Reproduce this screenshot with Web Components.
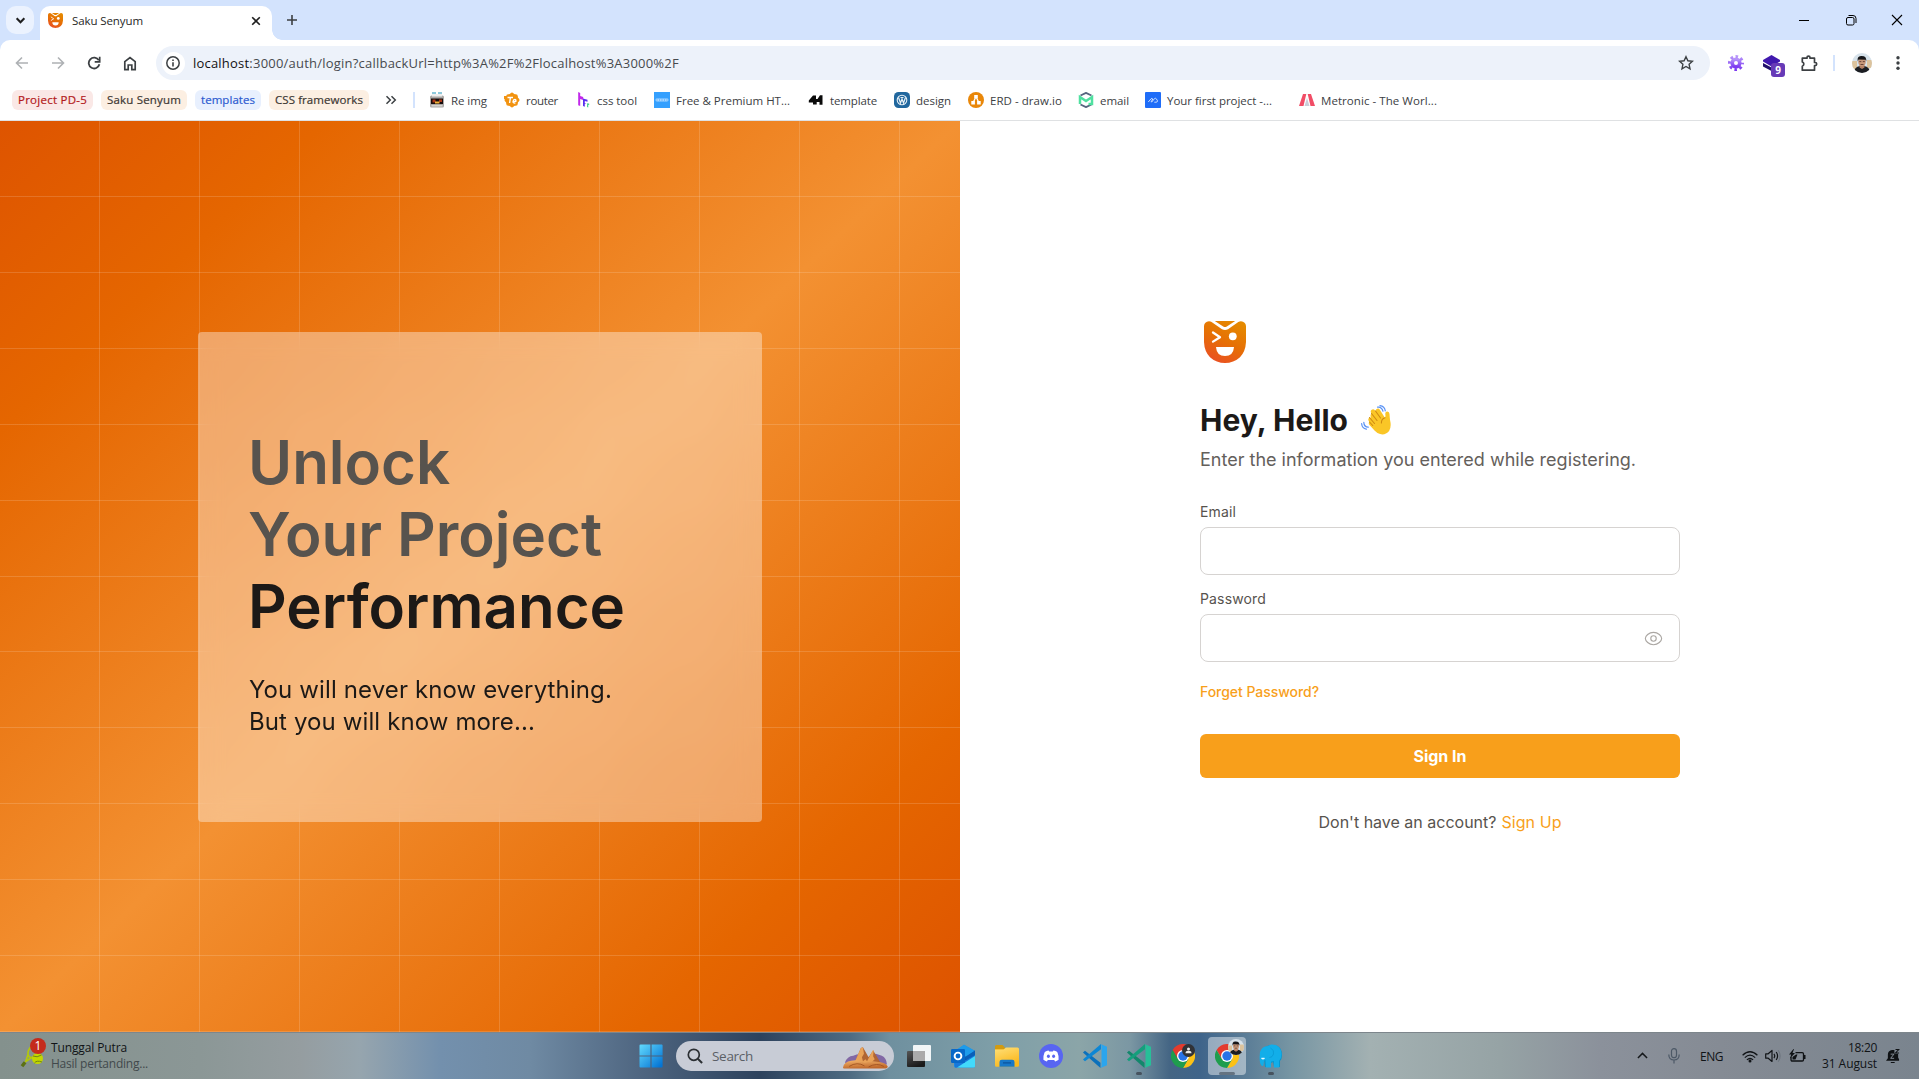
<!DOCTYPE html>
<html lang="en">
<head>
<meta charset="utf-8">
<title>Saku Senyum</title>
<style>
  html, body { margin: 0; height: 100%; overflow: hidden; background: #fff; }
  body { font-family: "Open Sans", "Noto Sans", sans-serif; }
</style>
</head>
<body>
<desktop-screen></desktop-screen>
<script>
const ICONS = {
  logo: ['0 0 42 42', `<defs><linearGradient id="g" x1=".75" y1="0" x2=".25" y2="1"><stop offset="0" stop-color="#e58a00"/><stop offset=".5" stop-color="#e66f05"/><stop offset="1" stop-color="#ea4f24"/></linearGradient></defs>
    <path fill="url(#g)" d="M10.8 0h20.4l-8.4 5.4q-1.8 1-3.6 0zM0 5Q.4.6 5 0.2q1.600 0 2.600.8L18 8.300q3 1.400 6 0L34.300 1q1.200-.8 2.700-.8Q41.500.6 42 5v16Q41.500 30.500 36 36.200 29.600 42 21 42T6 36.200Q.4 30.500 0 21z"/>
    <path d="M9 11.500l7 4.700-7 4.400" fill="none" stroke="#fff" stroke-width="2.300" stroke-linecap="round" stroke-linejoin="round"/>
    <circle cx="28.800" cy="15.300" r="3.900" fill="#fff"/><path fill="#fff" d="M12 26h18q-.6 9-9 9t-9-9z"/>`],
  down: ['0 0 10 10', `<path d="M1.500 3L5 6.500 8.500 3" fill="none" stroke="#1f1f1f" stroke-width="1.900"/>`],
  close: ['0 0 10 10', `<path d="M1.200 1.200l7.600 7.600M8.800 1.200L1.200 8.800" stroke="#1f1f1f" stroke-width="1.600"/>`],
  plus: ['0 0 12 12', `<path d="M6 1v10M1 6h10" stroke="#3c3f42" stroke-width="1.600"/>`],
  min: ['0 0 12 12', `<path d="M1 6.500h10" stroke="#000"/>`],
  restore: ['0 0 12 12', `<rect x="1.500" y="3.500" width="7.500" height="7.500" rx="1.500" fill="none" stroke="#000"/><path d="M3.500 1.500h4.500a3 3 0 0 1 3 3V9" fill="none" stroke="#000"/>`],
  winclose: ['0 0 12 12', `<path d="M1 1l10 10M11 1L1 11" stroke="#000" stroke-width="1.100"/>`],
  back: ['0 0 14 14', `<path d="M13 7H2M7 1.500L1.500 7 7 12.500" fill="none" stroke="#aeb1b4" stroke-width="1.600"/>`],
  fwd: ['0 0 14 14', `<path d="M1 7h11M7 1.500L12.500 7 7 12.500" fill="none" stroke="#aeb1b4" stroke-width="1.600"/>`],
  reload: ['0 0 14 14', `<path d="M11.800 4.300A5.400 5.400 0 1 0 12.400 8.300" fill="none" stroke="#3c4043" stroke-width="1.800"/><path d="M12.700.8v5H7.700" fill="none" stroke="#3c4043" stroke-width="1.700"/>`],
  home: ['0 0 14 15', `<path d="M1.800 13.700V5.700L7 1.500l5.200 4.200v8H8.800V9H5.200v4.700z" fill="none" stroke="#3c4043" stroke-width="1.700"/>`],
  info: ['0 0 16 16', `<circle cx="8" cy="8" r="6.200" fill="none" stroke="#3c4043" stroke-width="1.500"/><path d="M8 7.200v4.200M8 4.400v1.600" stroke="#3c4043" stroke-width="1.600"/>`],
  star: ['0 0 16 16', `<path d="M8 1.700l1.900 4.100 4.500.5-3.300 3 .9 4.500L8 11.500l-4 2.300.9-4.500-3.300-3 4.500-.5z" fill="none" stroke="#3c4043" stroke-width="1.400"/>`],
  gear: ['0 0 16 16', `<defs><linearGradient id="g" x2="0" y2="1"><stop stop-color="#b794fa"/><stop offset="1" stop-color="#7c3af0"/></linearGradient></defs><g stroke="url(#g)" fill="none"><circle cx="8" cy="8" r="3.800" stroke-width="3.600"/><circle cx="8" cy="8" r="6.500" stroke-width="3" stroke-dasharray="2.550 2.550" stroke-dashoffset="1.200"/></g>`],
  stack: ['0 0 17 17', `<path fill="#21106b" d="M0 8l8.500 4.500L17 8v3.500L8.500 16 0 11.500z"/><path fill="#4119ae" d="M8.500 0L17 5v1.500l-8.500 5-8.500-5V5z"/>`],
  puzzle: ['0 0 18 18', `<path d="M2.300 4.200H7V3.600a1.500 1.500 0 0 1 3 0v.6h4.500v4.300h.6a1.600 1.600 0 0 1 0 3.200h-.6v4.500H2.300v-4a2.200 2.200 0 0 0 0-4.200z" fill="none" stroke="#3c4043" stroke-width="1.700" stroke-linejoin="round"/>`],
  avatar: ['0 0 20 20', `<defs><clipPath id="c"><circle cx="10" cy="10" r="10"/></clipPath></defs><g clip-path="url(#c)"><path fill="#d7e2ea" d="M0 0h20v20H0z"/><path fill="#dcc39d" d="M0 8h5v8H0zM15 7h5v8h-5z"/><path d="M2 20q0-6 6-7h4q6 1 6 7z" fill="#1b1d22"/><path d="M7.500 11h5v3.500L10 16l-2.500-1.500z" fill="#b37f63"/><ellipse cx="10" cy="8.800" rx="3.800" ry="4.600" fill="#c8987a"/><path d="M5.800 8.500Q4.700 3.300 9 3.100q5.800-.4 5.300 5.400l-.8-1.700Q10 6.600 6.600 6.600z" fill="#17171a"/><path d="M7.300 8.600h2M10.800 8.600h2M8.500 11.500h3" stroke="#5c3a30" stroke-width=".9"/></g>`],
  dots: ['0 0 4 16', `<g fill="#3c4043"><circle cx="2" cy="2.700" r="1.700"/><circle cx="2" cy="8" r="1.700"/><circle cx="2" cy="13.300" r="1.700"/></g>`],
  more: ['0 0 12 10', `<path d="M1.500 1.200L5.300 5 1.500 8.800M6.500 1.200L10.300 5 6.500 8.800" fill="none" stroke="#3c4043" stroke-width="1.500"/>`],
  reimg: ['0 0 16 16', `<path fill="#8ec9dc" d="M3 0h4v2H3zM9 0h4v2H9z"/><rect y="3.500" x="1" width="14" height="12" rx="1.500" fill="#aaa7a5"/><path fill="#eee" d="M3 2h10v2.500H3z"/><path fill="#170d0d" d="M2 6.500h12v5.500H2z"/><path fill="#ac3717" d="M3.500 7.500h3v3h-3zM10 7.500h3v2.500h-3z"/><path fill="#f5b43b" d="M6 9.500h4.500v2H6z"/><path fill="#d7d4d0" d="M2.500 13h11v1.500h-11z"/>`],
  router: ['0 0 16 16', `<g fill="#f29310"><rect x="2.200" y="2.200" width="11.600" height="11.600" rx="2"/><rect x="2.200" y="2.200" width="11.600" height="11.600" rx="2" transform="rotate(45 8 8)"/><path d="M0 4h8v3H0z"/></g><path d="M3.500 5.500H9M6.400 5.500L5.600 11M9.300 9.400h2.500q.3-2-1-2-1.500 0-1.700 2-.2 2 2.300 1.500" stroke="#fff" stroke-width="1.400" fill="none"/>`],
  csstool: ['0 0 16 16', `<path d="M3.200 0l2 1v3l3 1v3L5.200 7v7l-2-.7z" fill="#c128ea"/><path d="M8 6.500l4.500 1.200v2L9.800 9v2l1.700.6-1.700.2v3L8 14z" fill="#5a2ff0"/><path d="M12.200 11.200l2 .6v1l-1 0v2.700l-1-.4z" fill="#21c87a"/>`],
  free: ['0 0 16 16', `<path fill="#35a0fe" d="M0 0h16v16H0z"/><rect x="1.500" y="6.600" width="13" height="2.800" rx="1.400" fill="#a9d6ff"/><path d="M2.500 8h11" stroke="#35a0fe" stroke-dasharray="1 1.500"/>`],
  template: ['0 0 16 16', `<path d="M.8 8.500L5 3.500h3V7h1.500l2.500-3.800h2.500v9.500h-3V10H8.700v2.500H5V10.500H.8z" fill="#0a0a0a"/>`],
  design: ['0 0 16 16', `<rect width="16" height="16" rx="4.500" fill="#21679e"/><circle cx="8" cy="8" r="4.800" fill="none" stroke="#e8f1f7" stroke-width="1.100"/><path d="M4.500 5.500L6.500 11 8 7l1.500 4 2-5.500M6.500 5.500h3" fill="none" stroke="#e8f1f7" stroke-width="1.200"/>`],
  draw: ['0 0 16 16', `<circle cx="8" cy="8" r="8" fill="#e98709"/><path d="M8 4.500L5 11M8 4.500L11 11" stroke="#fff" stroke-width="1.300"/><path fill="#fff" d="M6.200 3h3.600v3.200H6.200zM3.300 9h3.600v3.400H3.300zM9.100 9h3.600v3.400H9.100z"/>`],
  email: ['0 0 16 16', `<path d="M2.500 3.500L8 .9l5.500 2.600M2.500 12.500L8 15.100l5.500-2.600" stroke="#56657f" stroke-width="1.900" fill="none"/><path d="M2 12V5l6 4 6-4v7h-3.500" stroke="#4fe0a0" stroke-width="2.500" fill="none"/>`],
  project: ['0 0 16 16', `<rect width="16" height="16" rx="1" fill="#1f6df8"/><path d="M3.300 10L6 6.800q1-.8 1.800.2L6 10M6.500 10.300L9.500 6.600q1-.8 1.800.2l1.200 2q0 1.400-1.300 1.400H9.300" stroke="#dbe8ff" stroke-width=".9" fill="none"/>`],
  metronic: ['0 0 16 16', `<path fill="#f14d66" d="M4 2h3.300L4.500 14H0zM8.700 2H12l4 12h-4.500z"/><path fill="#c9ced9" d="M8 6l2.500 8h-5z"/>`],
  wave: ['0 0 30 30', `<g fill="none" stroke="#5b93f5" stroke-width="1.200" stroke-linecap="round"><path d="M16.500 2.200q4-.8 5.500 4M19 .6q4.600.6 5.300 5.200M2.800 17.400q.2 4.600 4.500 4.800M.6 18.500q.4 5 4.800 5.600"/></g>
    <path fill="#fac627" d="M10.500 8.500q-1.700-2.300.2-3.700 1.800-1.200 3.400.8l.7.500q-.3-1.800 1.300-2.400 1.800-.6 2.900 1.200l4.900 7.800q.7-.7.500-2.800-.6-3 1.500-3.300 2.500-.3 2.600 2.500.2 3 .5 5.600 1.700 7.300-.9 11.300-3.700 4.400-9 3.100-3-.8-5.600-3.600l-5-5.500q-1.500-1.900 0-3-2.200-2.400-.5-4 .9-.7 2-.1-1.200-3 .5-4.400z"/>
    <path d="M10.500 8.500l5.500 7M14.500 6l5 7M8.500 12.500l5 6M8.500 17l3.200 3.500M24 12.700q-3.700 1-3.600 5.300" fill="none" stroke="#cf8a12" stroke-width="1.100" stroke-linecap="round"/>`],
  eye: ['0 0 20 16', `<g fill="none" stroke="#aba7a3" stroke-width="1.200"><path d="M1.300 8C1.300 5.500 5 1.400 10 1.400S18.700 5.500 18.700 8 15 14.600 10 14.600 1.300 10.500 1.300 8z"/><circle cx="10" cy="8" r="2.900"/></g>`],
  tennis: ['0 0 26 24', `<g transform="rotate(-52 12 12)"><ellipse cx="18.500" cy="12" rx="7.500" ry="5" fill="none" stroke="#b3c70c" stroke-width="1.700"/><path d="M12 9.500L5 12l7 2.500" fill="none" stroke="#b3c70c" stroke-width="1.700"/><path d="M-1 12h5" stroke="#5c7115" stroke-width="3.400"/></g><circle cx="19.500" cy="14.500" r="5.500" fill="#c2d600"/><path d="M15 12q4 2 8.500-1M16.500 19q2-3 7.500-1" stroke="#70841a" fill="none"/>`],
  windows: ['0 0 24 24', `<defs><linearGradient id="g" gradientUnits="userSpaceOnUse" x1="2" y1="2" x2="22" y2="22"><stop stop-color="#5cd3fb"/><stop offset="1" stop-color="#0474d4"/></linearGradient></defs><path fill="url(#g)" d="M1.500.5H11.400V11.400H.5V1.500q0-1 1-1zM12.600.5h10q1 0 1 1v9.900h-11zM.5 12.600h10.900v11H1.500q-1 0-1-1zM12.600 12.600h11v10q0 1-1 1h-10z"/>`],
  search: ['0 0 16 16', `<circle cx="6.800" cy="6.800" r="5.500" fill="none" stroke="#2b2f33" stroke-width="1.700"/><path d="M10.800 10.800l4.300 4.200" stroke="#2b2f33" stroke-width="2"/>`],
  desert: ['0 0 44 22', `<defs><linearGradient id="g" x2=".3" y2="1"><stop stop-color="#f3b46a"/><stop offset="1" stop-color="#c0682a"/></linearGradient></defs><path fill="#8268a4" d="M2 15Q4 9 10 8.500l4-1.500 8 4 10-4.500 6 2q4.500 2 5 8.500H3z"/><path fill="#b06533" d="M11 16L17.500 1l2-.7L25 10l4.500-6.500L37 16z"/><path fill="#e9a257" d="M11 16L17.500 1l2-.7 1 6.200-2 3.500 1 4 2.500-2 1.500 2 5.500-10.500 1-.5-.5 6 1.500 3-4 4z"/><path fill="url(#g)" d="M0 20Q1 14.500 8 13.500q7-1.500 13 2 7-2.500 12-1 8 .5 10.500 4 .8 2-1.500 2.500H2q-2 .5-2-1z"/><path d="M6 19q8-5 15-.5M25 19.500q8-4.500 15-.5" fill="none" stroke="#9c4f1f" stroke-width=".8"/>`],
  taskview: ['0 0 24 24', `<defs><linearGradient id="g" x2=".5" y2="1"><stop stop-color="#555"/><stop offset="1" stop-color="#191919"/></linearGradient></defs><rect x="0" y="7" width="18" height="16" rx="1" fill="url(#g)"/><rect x="6" y="1" width="18" height="16" rx="1" fill="#fff" fill-opacity=".9"/><path d="M6 7h12v10H6z" fill="#aaa"/>`],
  outlook: ['0 0 24 24', `<path fill="#1a8ee6" d="M3 8L13 .8 24 7v15q0 1.500-1.500 1.500H4.500Q3 23.500 3 22z"/><path fill="#0759b4" d="M6 6l8-2 10 3-.5 5-10 5z"/><path fill="#1e9bea" d="M5 6l8-5.200L24 7l-9 6z"/><path fill="#0a5fb8" d="M14 13L24 6.500V11l-9 6z"/><path fill="#1778da" d="M3 15l9 3 12-7v6L8 23.500H4z"/><path fill="#42d9fb" d="M24 12v10.500q0 1-1.500 1H6z"/><rect y="5" width="14" height="14" rx="1.200" fill="#0868c8"/><circle cx="7" cy="12" r="3.400" fill="none" stroke="#fff" stroke-width="1.900"/>`],
  folder: ['0 0 24 24', `<defs><linearGradient id="g" x2=".4" y2="1"><stop stop-color="#ffe07a"/><stop offset="1" stop-color="#fab81d"/></linearGradient></defs><path fill="#d29b11" d="M0 2.500Q0 1 1.500 1h6L10 3.500V9H0z"/><path fill="#e9a90e" d="M0 5h24v4H0z"/><path fill="url(#g)" d="M0 5.500h8.500L11 3.400h11.500Q24 3.400 24 5v16.500q0 1.200-1.200 1.200H1.200Q0 22.700 0 21.500z"/><path fill="#1778c9" d="M4.500 22.700V18q0-2.300 2.300-2.300h10.400q2.300 0 2.300 2.300v4.700z"/><path fill="#0e5da8" d="M8 18h8v1.700H8z"/>`],
  discord: ['0 0 24 24', `<circle cx="12" cy="12" r="12" fill="#5865f2"/><path fill="#fff" d="M8.400 6.800l1.200-.3.600 1h3.600l.6-1 1.300.3q2.300.6 2.800 1.700 1.500 3.500 1.100 7.300-1.600 1.300-3.500 1.700l-.9-1.400H8.800l-.9 1.400q-1.900-.4-3.500-1.700-.4-3.800 1.100-7.300.6-1 2.900-1.700z"/><ellipse cx="9.400" cy="12.300" rx="1.500" ry="1.800" fill="#5865f2"/><ellipse cx="14.600" cy="12.300" rx="1.500" ry="1.800" fill="#5865f2"/>`],
  vscode: ['0 0 24 24', `<path fill="#0b70bb" d="M0 8.500L2 6.800l15.500 12V24L.2 8.800z"/><path fill="#0c86d4" d="M0 15.500l2 1.700L18 5.200V0L.2 15.200z"/><path fill="#2ba5ee" d="M17.500 0L24 2.800v18.500L17.500 24q1-.8 1-2V2q0-1.500-1-2z"/>`],
  insiders: ['0 0 24 24', `<path fill="#12876b" d="M0 8.500L2 6.800l15.500 12V24L.2 8.800z"/><path fill="#149f7c" d="M0 15.500l2 1.700L18 5.200V0L.2 15.200z"/><path fill="#27bf98" d="M17.500 0L24 2.800v18.500L17.500 24q1-.8 1-2V2q0-1.500-1-2z"/>`],
  chrome: ['0 0 24 24', `<path fill="#e33b2e" d="M1.600 6A12 12 0 0 1 22.400 6H12L6.800 15z"/><path fill="#fbc116" d="M22.400 6A12 12 0 0 1 12 24L17.200 15 12 6z"/><path fill="#1f9d4d" d="M12 24A12 12 0 0 1 1.600 6L6.800 15h10.400z"/><circle cx="12" cy="12" r="6" fill="#fff"/><circle cx="12" cy="12" r="4.700" fill="#2773e8"/>`],
  user: ['0 0 13 13', `<circle cx="6.500" cy="6.500" r="6.500" fill="#303236"/><circle cx="6.500" cy="4.900" r="1.500" fill="#e8e8e8"/><path d="M3.500 9.200q0-2.400 3-2.400t3 2.400z" fill="#e8e8e8"/>`],
  elephant: ['0 0 24 24', `<path fill="#0797ce" d="M2 8Q6 0 15 1q8 1 8 10 0 4-2 6v6h-6l-1-5-2 1v4H6l-1-8z"/><path fill="#12aee9" d="M1 8Q3 2 9 2l3-1.500Q22 0 22.500 10q.2 4-2.500 7v6.500h-5V17l-3 .5v6H7l-.5-7.500Q5 15 4.700 20q0 2.500-2 1.800Q.5 20 .6 13z"/><path d="M11.500 4q4 2 3 6-1 3.500-4 3.500" fill="none" stroke="#0a9bd6" stroke-width=".9"/><path d="M2.500 14.200q1.500 1 3 0" stroke="#e8f8ff" stroke-width="1.400" fill="none"/>`],
  up: ['0 0 12 8', `<path d="M1 6.500l5-5 5 5" fill="none" stroke="#15181b" stroke-width="1.600"/>`],
  mic: ['0 0 12 16', `<rect x="3.500" y=".7" width="5" height="9" rx="2.500" fill="none" stroke="#4d5967" stroke-width="1.200"/><path d="M.8 6.500Q.8 12 6 12t5.200-5.500M6 12v3.500" fill="none" stroke="#4d5967" stroke-width="1.200"/>`],
  wifi: ['0 0 16 13', `<g fill="none" stroke="#111417" stroke-width="1.200"><path d="M.6 5.300Q8-1.800 15.400 5.300M2.800 7.600q5.200-4.800 10.400 0M4.900 9.900q3.100-2.800 6.200 0"/></g><circle cx="8" cy="11" r="1.500" fill="#111417"/>`],
  sound: ['0 0 16 14', `<path d="M.7 4.800h2.500L7 1.500v11L3.200 9.200H.7z" fill="none" stroke="#111417" stroke-width="1.200" stroke-linejoin="round"/><path d="M9 4.800q1.600 2.200 0 4.400M11.200 3q2.800 4 0 8" fill="none" stroke="#111417" stroke-width="1.200"/><path d="M13.300 1.300q3.600 5.700 0 11.400" fill="none" stroke="#69727b"/>`],
  battery: ['0 0 17 14', `<path d="M6.500 3.700h6.700q1.300 0 1.300 1.300v5.700q0 1.300-1.300 1.300H3.300Q2 12 2 10.700V8" fill="none" stroke="#0f1215" stroke-width="1.300"/><path fill="#0f1215" d="M15 6h1.500v4H15zM3.500 10.500V8L7 5.500h1.500L6.500 10.500zM4.500 0L0 5.500h2.200L1 9.500 6 4H3.500L5 .3z"/>`],
  bell: ['0 0 15 16', `<path fill="#0f1215" d="M0 12.500L2 10V6q0-4.500 4.500-5H9v4h4V9l1 2v1.500zM5 14h4.500Q9 16 7.200 16T5 14z"/><path d="M5 5.500h3.500L5 10h3.700" fill="none" stroke="#8b939c" stroke-width="1"/><path d="M10.200.6h3.500L10.200 4.200h3.800" fill="none" stroke="#0f1215" stroke-width="1.100"/>`]
};

const define = (tag, markup) => {
  const template = document.createElement('template');
  template.innerHTML = markup;
  customElements.define(tag, class extends HTMLElement {
    connectedCallback() {
      if (this.shadowRoot) return;
      this.attachShadow({ mode: 'open' }).append(template.content.cloneNode(true));
    }
  });
};

/* <ui-icon name w h> draws one entry of ICONS */
customElements.define('ui-icon', class extends HTMLElement {
  connectedCallback() {
    if (this.shadowRoot) return;
    const [box, body] = ICONS[this.getAttribute('name')];
    const [, , bw, bh] = box.split(' ');
    const w = this.getAttribute('w') || bw, h = this.getAttribute('h') || bh * w / bw;
    this.attachShadow({ mode: 'open' }).innerHTML =
      `<style>:host{display:block;flex:none;width:${w}px;height:${h}px}svg{display:block}</style><svg width="${w}" height="${h}" viewBox="${box}">${body}</svg>`;
  }
});

/* <fit-text w> tracks its line so that it is exactly w pixels wide */
customElements.define('fit-text', class extends HTMLElement {
  connectedCallback() {
    if (this.shadowRoot) return;
    this.attachShadow({ mode: 'open' }).innerHTML =
      `<style>:host{display:inline-block;white-space:nowrap;flex:none}span{display:inline-block}</style><span><slot></slot></span>`;
    const span = this.shadowRoot.querySelector('span');
    const want = +this.getAttribute('w'), n = this.textContent.length;
    this.style.width = want + 'px';
    const have = span.getBoundingClientRect().width;
    if (have) this.style.letterSpacing = ((want - have) / n).toFixed(3) + 'px';
  }
});

define('tab-strip', `<style>
  :host{display:flex;height:40px;background:#d3e3fd;align-items:stretch;font-size:11.5px;color:#1f1f1f}
  .search{width:28px;height:28px;margin:6px 0 0 6px;border-radius:10px;background:#ebf2fe;display:grid;place-items:center}
  .tab{box-sizing:border-box;width:232px;margin:6px 0 0 6px;background:#fff;border-radius:10px 10px 0 0;display:flex;align-items:center;padding:0 11px 5px 8px}
  .tab fit-text{margin-left:9px;margin-right:auto}
  .flare{width:10px;height:10px;align-self:flex-end;background:radial-gradient(circle at 100% 0,#d3e3fd 9.5px,#fff 10px)}
  .plus{margin:14px 0 0 4px}
  .win{margin-left:auto;display:flex;gap:34.500px;padding:14px 16px 0 0}
</style>
<div class="search"><ui-icon name="down" w="11"></ui-icon></div>
<div class="tab"><ui-icon name="logo" w="15"></ui-icon><fit-text w="71">Saku Senyum</fit-text><ui-icon name="close" w="10"></ui-icon></div>
<div class="flare"></div><div class="plus"><ui-icon name="plus"></ui-icon></div>
<div class="win"><ui-icon name="min"></ui-icon><ui-icon name="restore"></ui-icon><ui-icon name="winclose"></ui-icon></div>`);

define('tool-bar', `<style>
  :host{display:block;background:#d3e3fd}
  .row{display:flex;height:46px;box-sizing:border-box;background:#fff;border-radius:10px 10px 0 0;align-items:center;padding:0 19px 0 15px}
  .nav{display:flex;gap:22px;width:141px;align-items:center}
  .omni{width:1555px;height:34px;border-radius:17px;background:#edf2fa;display:flex;align-items:center;box-sizing:border-box;padding:0 16px 0 6px;color:#474a4e;font-size:13px}
  .site{width:23px;height:23px;border-radius:50%;background:#fff;display:grid;place-items:center;margin-right:8px}
  b{font-weight:400;color:#111}
  .star{margin-left:auto}
  .ext{margin-left:18px;display:flex;align-items:center;flex:1}
  .stack{position:relative;margin-left:19px}
  .badge{position:absolute;left:8px;top:8px;width:14px;height:14px;border-radius:3px;background:#673ab7;color:#fff;font:700 10px/14px "Open Sans",sans-serif;text-align:center}
  .sep{width:2px;height:16px;background:#d3e3fd;margin:0 17px 0 15px}
</style><div class="row">
<div class="nav"><ui-icon name="back"></ui-icon><ui-icon name="fwd"></ui-icon><ui-icon name="reload"></ui-icon><ui-icon name="home"></ui-icon></div>
<div class="omni"><div class="site"><ui-icon name="info" w="16"></ui-icon></div><fit-text w="486"><b>localhost</b>:3000/auth/login?callbackUrl=http%3A%2F%2Flocalhost%3A3000%2F</fit-text><ui-icon class="star" name="star" w="16"></ui-icon></div>
<div class="ext"><ui-icon name="gear"></ui-icon><div class="stack"><ui-icon name="stack"></ui-icon><div class="badge">9</div></div><ui-icon name="puzzle" style="margin-left:20px"></ui-icon><div class="sep"></div><ui-icon name="avatar" style="margin-right:24px"></ui-icon><ui-icon name="dots"></ui-icon></div></div>`);

define('group-chip', `<style>:host{display:flex;height:20px;line-height:19px;border-radius:6px;padding:0 6px;margin-right:8px;font-size:11.500px;-webkit-text-stroke:.2px}</style><slot></slot>`);
define('bookmark-item', `<style>:host{display:flex;align-items:center;gap:6px;flex:none}</style><slot name="icon"></slot><slot></slot>`);

define('bookmark-bar', `<style>
  :host{display:flex;height:35px;box-sizing:border-box;border-bottom:1px solid #dfe1e3;background:#fff;align-items:center;padding:0 0 6px 12px;font-size:11.500px;line-height:15px;color:#3c4043}
  .sep{width:2px;height:16px;background:#d3e3fd;margin:0 14px 0 16px}
</style>
<group-chip style="background:#fae8e6;color:#b3191b"><fit-text w="69">Project PD-5</fit-text></group-chip>
<group-chip style="background:#fcefe2;color:#3d3834"><fit-text w="74">Saku Senyum</fit-text></group-chip>
<group-chip style="background:#e8f0fe;color:#2c5bd0"><fit-text w="54">templates</fit-text></group-chip>
<group-chip style="background:#fcefe2;color:#3d3834;margin-right:16px"><fit-text w="88">CSS frameworks</fit-text></group-chip>
<ui-icon name="more"></ui-icon><div class="sep"></div>
<bookmark-item style="width:75px"><ui-icon slot="icon" name="reimg"></ui-icon><fit-text w="36">Re img</fit-text></bookmark-item>
<bookmark-item style="width:71px"><ui-icon slot="icon" name="router"></ui-icon><fit-text w="32">router</fit-text></bookmark-item>
<bookmark-item style="width:79px"><ui-icon slot="icon" name="csstool"></ui-icon><fit-text w="40">css tool</fit-text></bookmark-item>
<bookmark-item style="width:154px"><ui-icon slot="icon" name="free"></ui-icon><fit-text w="114">Free &amp; Premium HT...</fit-text></bookmark-item>
<bookmark-item style="width:86px"><ui-icon slot="icon" name="template"></ui-icon><fit-text w="47">template</fit-text></bookmark-item>
<bookmark-item style="width:74px"><ui-icon slot="icon" name="design"></ui-icon><fit-text w="35">design</fit-text></bookmark-item>
<bookmark-item style="width:110px"><ui-icon slot="icon" name="draw"></ui-icon><fit-text w="72">ERD - draw.io</fit-text></bookmark-item>
<bookmark-item style="width:67px"><ui-icon slot="icon" name="email"></ui-icon><fit-text w="29">email</fit-text></bookmark-item>
<bookmark-item style="width:154px"><ui-icon slot="icon" name="project"></ui-icon><fit-text w="105">Your first project -...</fit-text></bookmark-item>
<bookmark-item><ui-icon slot="icon" name="metronic"></ui-icon><fit-text w="116">Metronic - The Worl...</fit-text></bookmark-item>`);

define('hero-panel', `<style>
  :host{display:flex;width:960px;flex:none;align-items:center;justify-content:center;font-family:Inter,sans-serif;
    background:repeating-linear-gradient(to right,transparent 0 99px,#ffffff26 99px 100px),
      repeating-linear-gradient(to bottom,transparent 0 74.920px,#ffffff26 74.920px 75.920px),
      linear-gradient(to bottom right,#de5400,#e56600 17%,#f39132 50%,#e56600 83%,#dd5200)}
  .card{box-sizing:border-box;width:564px;height:490px;border-radius:4px;background:#ffffff61;backdrop-filter:blur(12px);padding:94px 50px 0}
  h2{margin:0;font-size:60px;line-height:72px;font-weight:600;color:#1c1917}
  h2 span{color:#57534e}
  p{margin:32px 0 0 1px;font-size:24px;line-height:32px;color:#1c1917}
</style><div class="card"><h2><span>Unlock<br>Your Project</span><br>Performance</h2>
<p><fit-text w="363">You will never know everything.</fit-text><br><fit-text w="286">But you will know more...</fit-text></p></div>`);

define('form-field', `<style>
  :host{display:block;font-size:14px;line-height:20px;color:#57534e}
  .box{display:flex;align-items:center;justify-content:flex-end;height:48px;box-sizing:border-box;border:1px solid #d6d3d1;border-radius:8px;padding-right:16px;margin-top:5px;background:#fff}
</style><slot name="label"></slot><div class="box"><slot></slot></div>`);

define('login-form', `<style>
  :host{display:flex;flex-direction:column;width:480px;font-family:Inter,sans-serif;color:#57534e}
  h1{margin:39px 0 0;font-size:30px;line-height:36px;font-weight:700;color:#1c1917;display:flex;align-items:center}
  .lead{font-size:18px;line-height:28px;margin-top:8px;color:#64605b}
  form-field{margin-top:28px}
  form-field + form-field{margin-top:14px}
  a{color:#f89f1b}
  .forgot{font-size:14px;line-height:20px;margin-top:20px;font-weight:500}
  .btn{height:44px;border-radius:6px;background:#f89f1b;color:#fff;font-size:16px;font-weight:700;display:grid;place-items:center;margin-top:32px}
  .up{display:flex;justify-content:center;font-size:16px;line-height:24px;margin-top:32px}
</style>
<ui-icon name="logo" style="margin-left:4px"></ui-icon>
<h1><fit-text w="148">Hey, Hello</fit-text><ui-icon name="wave" style="margin-left:13px"></ui-icon></h1>
<div class="lead"><fit-text w="436">Enter the information you entered while registering.</fit-text></div>
<form-field><fit-text slot="label" w="36">Email</fit-text></form-field>
<form-field><fit-text slot="label" w="66">Password</fit-text><ui-icon name="eye" w="19" h="15"></ui-icon></form-field>
<div class="forgot"><a><fit-text w="119">Forget Password?</fit-text></a></div>
<div class="btn"><fit-text w="53">Sign In</fit-text></div>
<div class="up"><fit-text w="178">Don't have an account?</fit-text><a style="margin-left:5px"><fit-text w="60">Sign Up</fit-text></a></div>`);

define('login-page', `<style>
  :host{display:flex;height:911px;background:#fff}
  .right{flex:1;display:flex;justify-content:center;padding:200px 0 0 1px}
</style><hero-panel></hero-panel><div class="right"><login-form></login-form></div>`);

define('app-button', `<style>
  :host{display:flex;position:relative;width:38px;height:38px;margin:0 3px;border-radius:4px;align-items:center;justify-content:center;flex:none}
  :host([active]){background:#ffffff70}
  :host([running])::after{content:"";position:absolute;bottom:0;left:16px;width:6px;height:3px;border-radius:2px;background:#46535f}
  :host([active])::after{left:11px;width:16px;background:#647381}
  ::slotted([slot=badge]){position:absolute;right:7px;top:7px}
  :host([active]) ::slotted([slot=badge]){right:2px;top:2px}
</style><slot></slot><slot name="badge"></slot>`);

define('task-bar', `<style>
  :host{display:flex;height:47px;box-sizing:border-box;border-top:1px solid #7d868c;align-items:center;font-size:12px;color:#101316;
    background:linear-gradient(to right,#84918d 0,#8b9796 200px,#959da0 300px,#96a5ae 360px,#7390ad 440px,#6f8aa3 530px,#4f6681 640px,#2d425d 760px,#4e6b82 850px,#6f909f 890px,#7f9fa8 1000px,#8ba5a8 1080px,#7b97a3 1130px,#446584 1170px,#3f648a 1200px,#7695a3 1290px,#a3b1b2 1370px,#96a3a5 1500px,#8b919b 1600px,#858b94 1720px,#7a848e 1919px)}
  .news{display:flex;position:relative;width:639px;box-sizing:border-box;padding-left:18px;gap:7px;align-items:center}
  .badge{position:absolute;left:30px;top:-2px;width:16px;height:16px;border-radius:50%;background:#c42b1c;color:#fff;font-size:12px;line-height:16px;text-align:center}
  .txt{display:flex;flex-direction:column;line-height:16px}
  .txt :last-child{color:#42494c}
  .search{display:flex;box-sizing:border-box;width:218px;height:30px;border-radius:15px;background:#c8ccd6;margin:0 3px 0 13px;align-items:center;padding:0 6px 0 11px;color:#5b5f66;font-size:13.500px}
  .search fit-text{margin:0 auto 0 9px}
  .desert{margin-top:5px}
  .tray{display:flex;align-items:center;margin-left:auto;padding-right:19px}
  .clock{display:flex;flex-direction:column;align-items:flex-end;line-height:16px;margin:0 9px 0 16px}
</style>
<div class="news"><ui-icon name="tennis"></ui-icon><div class="badge">1</div><div class="txt"><fit-text w="76">Tunggal Putra</fit-text><fit-text w="97">Hasil pertanding...</fit-text></div></div>
<ui-icon name="windows"></ui-icon>
<div class="search"><ui-icon name="search"></ui-icon><fit-text w="41">Search</fit-text><ui-icon class="desert" name="desert" w="45"></ui-icon></div>
<app-button><ui-icon name="taskview"></ui-icon></app-button>
<app-button><ui-icon name="outlook"></ui-icon></app-button>
<app-button><ui-icon name="folder"></ui-icon></app-button>
<app-button><ui-icon name="discord"></ui-icon></app-button>
<app-button><ui-icon name="vscode"></ui-icon></app-button>
<app-button running><ui-icon name="insiders"></ui-icon></app-button>
<app-button><ui-icon name="chrome"></ui-icon><ui-icon slot="badge" name="user"></ui-icon></app-button>
<app-button running active><ui-icon name="chrome"></ui-icon><ui-icon slot="badge" name="avatar" w="16"></ui-icon></app-button>
<app-button running><ui-icon name="elephant"></ui-icon></app-button>
<div class="tray"><ui-icon name="up" w="11"></ui-icon><ui-icon name="mic" style="margin:0 20px 0 20px"></ui-icon><fit-text w="23">ENG</fit-text><ui-icon name="wifi" style="margin-left:19px"></ui-icon><ui-icon name="sound" style="margin:0 8px 0 7px"></ui-icon><ui-icon name="battery"></ui-icon>
<div class="clock"><fit-text w="29">18:20</fit-text><fit-text w="55">31 August</fit-text></div><ui-icon name="bell" w="14"></ui-icon></div>`);

define('desktop-screen', `<style>:host{display:flex;flex-direction:column;width:1919px;height:1079px;overflow:hidden}</style>
<tab-strip></tab-strip><tool-bar></tool-bar><bookmark-bar></bookmark-bar><login-page></login-page><task-bar></task-bar>`);
</script>
</body>
</html>
